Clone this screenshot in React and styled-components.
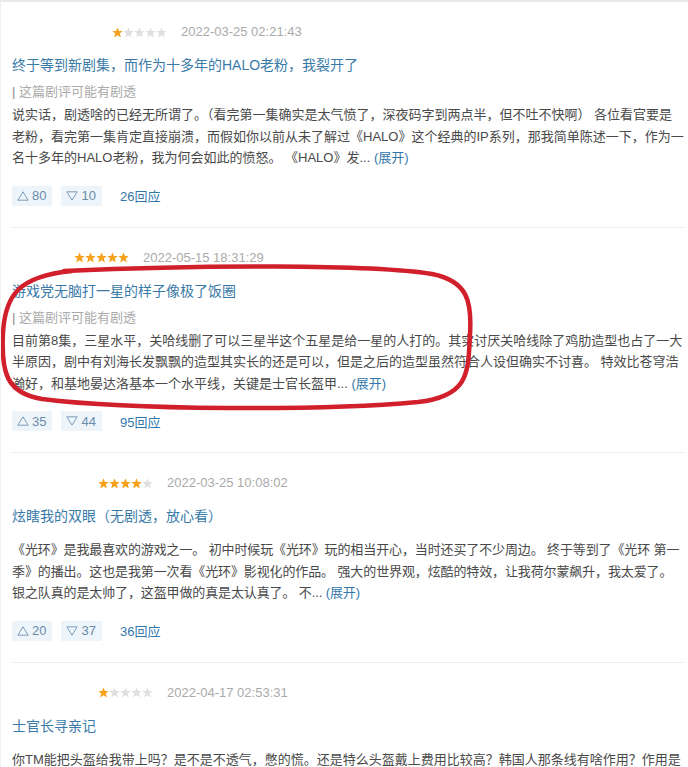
import React from 'react';
import styled, { createGlobalStyle } from 'styled-components';

const Global = createGlobalStyle`
  html, body { margin: 0; padding: 0; background: #fff; }
  body { font-family: "Liberation Sans", Arial, "Noto Sans CJK SC", sans-serif; }
`;

const Page = styled.div`
  position: relative;
  width: 688px;
  height: 767px;
  overflow: hidden;
  box-sizing: border-box;
  border-top: 2px solid #e9e9e9;
  border-left: 1px solid #f0f0f0;
  background: #fff;
`;

const List = styled.div`
  padding: 0 4px 0 11px;
`;

const Review = styled.section`
  padding: 20px 0 21px;
  border-bottom: 1px solid #ececec;
`;

const Header = styled.div`
  display: flex;
  align-items: center;
  height: 20px;
`;

const NameSpace = styled.span`
  display: inline-block;
  width: ${p => p.$w}px;
`;

const Stars = styled.span`
  display: inline-flex;
`;

const DateText = styled.span`
  margin-left: 14px;
  font-size: 13px;
  color: #aaa;
  line-height: 20px;
`;

const Title = styled.div`
  margin-top: 12px;
  font-size: 14px;
  line-height: 22px;
  color: #3a7aa8;
`;

const Spoiler = styled.div`
  margin-top: 6px;
  font-size: 13px;
  line-height: 20px;
  color: #aaa;
`;

const Bar = styled.span`
  color: #888;
`;

const Body = styled.div`
  margin-top: ${p => (p.$tight ? 2 : 12)}px;
  font-size: 13px;
  line-height: 21.5px;
  letter-spacing: ${p => p.$track || 0}px;
  color: #494949;
`;

const More = styled.span`
  color: #37a;
`;

const Actions = styled.div`
  display: flex;
  align-items: center;
  margin-top: 17px;
`;

const VoteBtn = styled.span`
  display: inline-flex;
  align-items: center;
  gap: 3px;
  height: 20px;
  padding: 0 6px 0 5px;
  margin-right: 9px;
  background: #eef5fa;
  color: #6a8cab;
  font-size: 13px;
`;

const Reply = styled.span`
  margin-left: 9px;
  font-size: 13px;
  color: #37a;
`;

const Overlay = styled.svg`
  position: absolute;
  top: -2px;
  left: -1px;
  width: 688px;
  height: 767px;
  pointer-events: none;
`;

const Star = ({ on }) => (
  <svg width="11" height="11" viewBox="0 0 11 11">
    <polygon
      points="5.5,0.4 7,3.9 10.7,4.1 7.8,6.6 8.8,10.4 5.5,8.3 2.2,10.4 3.2,6.6 0.3,4.1 4,3.9"
      fill={on ? '#f5a21f' : '#e0e0e0'}
    />
  </svg>
);

const Rating = ({ n }) => (
  <Stars>
    {[0, 1, 2, 3, 4].map(i => <Star key={i} on={i < n} />)}
  </Stars>
);

const Up = () => (
  <svg width="12" height="10" viewBox="0 0 12 10">
    <polygon points="0.8,9.2 6,0.8 11.2,9.2" fill="none" stroke="#7b9bb7" strokeWidth="1" />
  </svg>
);
const Down = () => (
  <svg width="12" height="10" viewBox="0 0 12 10">
    <polygon points="0.8,0.8 11.2,0.8 6,9.2" fill="none" stroke="#7b9bb7" strokeWidth="1" />
  </svg>
);

const reviews = [
  {
    space: 100,
    stars: 1,
    date: '2022-03-25 02:21:43',
    title: '终于等到新剧集，而作为十多年的HALO老粉，我裂开了',
    spoiler: true,
    body: '说实话，剧透啥的已经无所谓了。（看完第一集确实是太气愤了，深夜码字到两点半，但不吐不快啊） 各位看官要是老粉，看完第一集肯定直接崩溃，而假如你以前从未了解过《HALO》这个经典的IP系列，那我简单陈述一下，作为一名十多年的HALO老粉，我为何会如此的愤怒。 《HALO》发...',
    up: 80,
    down: 10,
    replies: 26,
  },
  {
    space: 62,
    stars: 5,
    date: '2022-05-15 18:31:29',
    title: '游戏党无脑打一星的样子像极了饭圈',
    spoiler: true,
    body: '目前第8集，三星水平，关哈线删了可以三星半这个五星是给一星的人打的。其实讨厌关哈线除了鸡肋造型也占了一大半原因，剧中有刘海长发飘飘的造型其实长的还是可以，但是之后的造型虽然符合人设但确实不讨喜。 特效比苍穹浩瀚好，和基地晏达洛基本一个水平线，关键是士官长盔甲...',
    up: 35,
    down: 44,
    replies: 95,
  },
  {
    space: 86,
    stars: 4,
    date: '2022-03-25 10:08:02',
    title: '炫瞎我的双眼（无剧透，放心看）',
    spoiler: false,
    track: -0.12,
    body: '《光环》是我最喜欢的游戏之一。 初中时候玩《光环》玩的相当开心，当时还买了不少周边。 终于等到了《光环 第一季》的播出。这也是我第一次看《光环》影视化的作品。 强大的世界观，炫酷的特效，让我荷尔蒙飙升，我太爱了。 银之队真的是太帅了，这盔甲做的真是太认真了。 不...',
    up: 20,
    down: 37,
    replies: 36,
  },
  {
    space: 86,
    stars: 1,
    date: '2022-04-17 02:53:31',
    title: '士官长寻亲记',
    spoiler: false,
    body: '你TM能把头盔给我带上吗？是不是不透气，憋的慌。还是特么头盔戴上费用比较高？韩国人那条线有啥作用？作用是',
    noMore: true,
  },
];

export default function App() {
  return (
    <>
      <Global />
      <Page>
        <List>
          {reviews.map((r, i) => (
            <Review key={i}>
              <Header>
                <NameSpace $w={r.space} />
                <Rating n={r.stars} />
                <DateText>{r.date}</DateText>
              </Header>
              <Title>{r.title}</Title>
              {r.spoiler && (
                <Spoiler>
                  <Bar>|</Bar> 这篇剧评可能有剧透
                </Spoiler>
              )}
              <Body $tight={r.spoiler} $track={r.track}>
                {r.body}
                {!r.noMore && (
                  <>
                    {' '}
                    <More>(展开)</More>
                  </>
                )}
              </Body>
              {r.up !== undefined && (
                <Actions>
                  <VoteBtn><Up />{r.up}</VoteBtn>
                  <VoteBtn><Down />{r.down}</VoteBtn>
                  <Reply>{r.replies}回应</Reply>
                </Actions>
              )}
            </Review>
          ))}
        </List>
        <Overlay viewBox="0 0 688 767">
          <path
            d="M 64 271 C 200 265, 370 264, 432 274 C 468 281, 472 302, 470 334 C 468 372, 470 396, 418 402 C 320 411, 130 410, 42 399 C 6 393, 1 372, 3 333 C 5 296, 18 276, 72 271"
            fill="none"
            stroke="#d11f2b"
            strokeWidth="4.5"
            strokeLinecap="round"
          />
        </Overlay>
      </Page>
    </>
  );
}
